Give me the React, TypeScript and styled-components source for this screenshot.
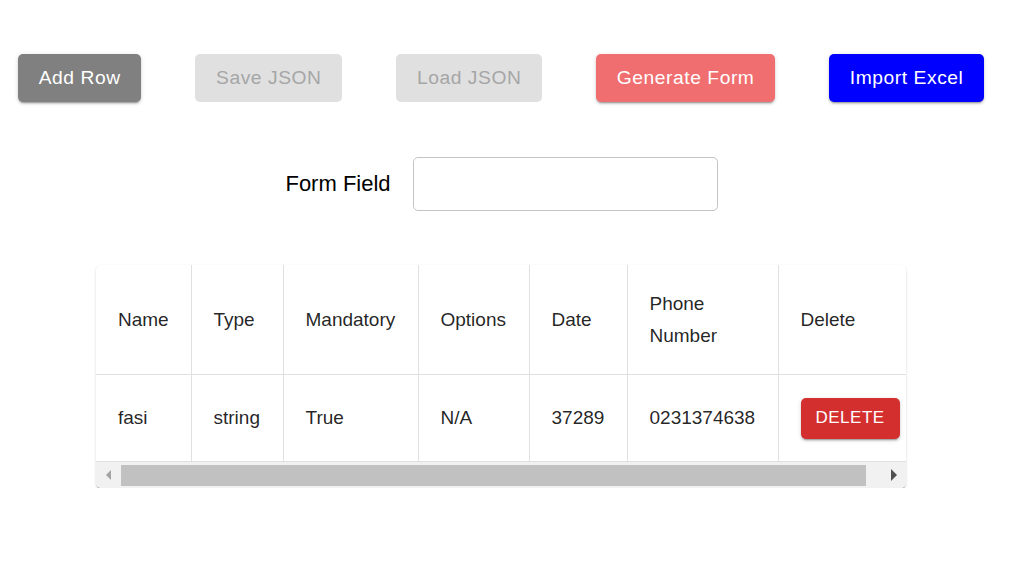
import React from "react";
import styled, { createGlobalStyle } from "styled-components";

const GlobalStyle = createGlobalStyle`
  html, body { margin: 0; padding: 0; background: #ffffff; }
  body { font-family: "Liberation Sans", Arial, sans-serif; color: rgba(0,0,0,0.87); }
`;

const Page = styled.div`
  display: flex;
  flex-direction: column;
  padding-top: 54px;
`;

const Toolbar = styled.div`
  display: flex;
  align-items: center;
  gap: 54px;
  padding-left: 18px;
`;

type Variant = "gray" | "disabled" | "coral" | "blue";

const bg: Record<Variant, string> = {
  gray: "#808080",
  disabled: "#e0e0e0",
  coral: "#f06e70",
  blue: "#0000ff",
};

const ActionButton = styled.button<{ $variant: Variant }>`
  height: 48px;
  padding: 0 20.7px;
  border: none;
  border-radius: 5px;
  font-family: "Liberation Sans", Arial, sans-serif;
  font-size: 19.25px;
  letter-spacing: 0.55px;
  background: ${(p) => bg[p.$variant]};
  color: ${(p) => (p.$variant === "disabled" ? "#a6a6a6" : "#ffffff")};
  box-shadow: ${(p) =>
    p.$variant === "disabled"
      ? "none"
      : "0 3px 1px -2px rgba(0,0,0,0.2), 0 2px 2px 0 rgba(0,0,0,0.14), 0 1px 5px 0 rgba(0,0,0,0.12)"};
  cursor: pointer;
`;

const FieldRow = styled.div`
  display: flex;
  align-items: center;
  justify-content: center;
  gap: 22px;
  margin-top: 55px;
  padding-right: 6px;
`;

const FieldLabel = styled.label`
  font-size: 22px;
  color: #000000;
`;

const FieldInput = styled.input`
  width: 305px;
  height: 54px;
  box-sizing: border-box;
  border: 1px solid #c4c4c4;
  border-radius: 5px;
  font-size: 18px;
  padding: 0 14px;
  outline: none;
`;

const Paper = styled.div`
  margin: 54px 0 0 96px;
  width: 810px;
  border-radius: 5px;
  background: #fff;
  box-shadow: 0 2px 1px -1px rgba(0,0,0,0.2), 0 1px 1px 0 rgba(0,0,0,0.14), 0 1px 3px 0 rgba(0,0,0,0.12);
  overflow: hidden;
`;

const Scroller = styled.div`
  overflow: hidden;
`;

const ScrollBar = styled.div`
  display: flex;
  height: 26px;
  background: #f1f1f1;
`;

const ScrollArrow = styled.div`
  width: 25px;
  flex: none;
  display: flex;
  align-items: center;
  justify-content: center;
`;

const ScrollTrack = styled.div`
  flex: 1;
  display: flex;
  align-items: center;
`;

const ScrollThumb = styled.div`
  height: 21px;
  background: #c1c1c1;
`;

const Table = styled.table`
  width: 826px;
  table-layout: fixed;
  border-collapse: collapse;
  font-size: 19px;
  line-height: 32px;
  color: rgba(0,0,0,0.87);
`;

const Col = styled.col<{ $w: number }>`
  width: ${(p) => p.$w}px;
`;

const Cell = styled.td`
  padding: 22.5px 22px;
  border-bottom: 1px solid #e0e0e0;
  border-right: 1px solid #e0e0e0;
  text-align: left;
  vertical-align: middle;
  font-weight: 400;
`;

const HeadCell = styled(Cell).attrs({ as: "th" })``;

const DeleteButton = styled.button`
  height: 41px;
  padding: 0 15px;
  border: none;
  border-radius: 5px;
  background: #d32f2f;
  color: #fff;
  font-family: "Liberation Sans", Arial, sans-serif;
  font-size: 17px;
  letter-spacing: 0.5px;
  text-transform: uppercase;
  white-space: nowrap;
  box-shadow: 0 3px 1px -2px rgba(0,0,0,0.2), 0 2px 2px 0 rgba(0,0,0,0.14), 0 1px 5px 0 rgba(0,0,0,0.12);
  cursor: pointer;
`;

const columns: [string, number][] = [
  ["Name", 95],
  ["Type", 92],
  ["Mandatory", 135],
  ["Options", 111],
  ["Date", 98],
  ["Phone Number", 151],
  ["Delete", 144],
];
const row = ["fasi", "string", "True", "N/A", "37289", "0231374638"];

const viewWidth = 810;
const tableWidth = columns.reduce((s, [, w]) => s + w, 0);
const trackWidth = viewWidth - 50;

export default function App() {
  const thumbWidth = Math.round((trackWidth * viewWidth) / tableWidth);
  return (
    <>
      <GlobalStyle />
      <Page>
        <Toolbar>
          <ActionButton $variant="gray">Add Row</ActionButton>
          <ActionButton $variant="disabled" disabled>Save JSON</ActionButton>
          <ActionButton $variant="disabled" disabled>Load JSON</ActionButton>
          <ActionButton $variant="coral">Generate Form</ActionButton>
          <ActionButton $variant="blue">Import Excel</ActionButton>
        </Toolbar>
        <FieldRow>
          <FieldLabel>Form Field</FieldLabel>
          <FieldInput type="text" />
        </FieldRow>
        <Paper>
          <Scroller>
            <Table>
              <colgroup>
                {columns.map(([h, w]) => (
                  <Col key={h} $w={w} />
                ))}
              </colgroup>
              <thead>
                <tr>
                  {columns.map(([h]) => (
                    <HeadCell key={h}>{h}</HeadCell>
                  ))}
                </tr>
              </thead>
              <tbody>
                <tr>
                  {row.map((c, i) => (
                    <Cell key={i}>{c}</Cell>
                  ))}
                  <Cell>
                    <DeleteButton>Delete</DeleteButton>
                  </Cell>
                </tr>
              </tbody>
            </Table>
          </Scroller>
          <ScrollBar>
            <ScrollArrow>
              <svg width="6" height="10" viewBox="0 0 6 10">
                <polygon points="5,0 5,10 0,5" fill="#a3a3a3" />
              </svg>
            </ScrollArrow>
            <ScrollTrack>
              <ScrollThumb style={{ width: thumbWidth }} />
            </ScrollTrack>
            <ScrollArrow>
              <svg width="6" height="12" viewBox="0 0 6 12">
                <polygon points="0,0 6,6 0,12" fill="#505050" />
              </svg>
            </ScrollArrow>
          </ScrollBar>
        </Paper>
      </Page>
    </>
  );
}
